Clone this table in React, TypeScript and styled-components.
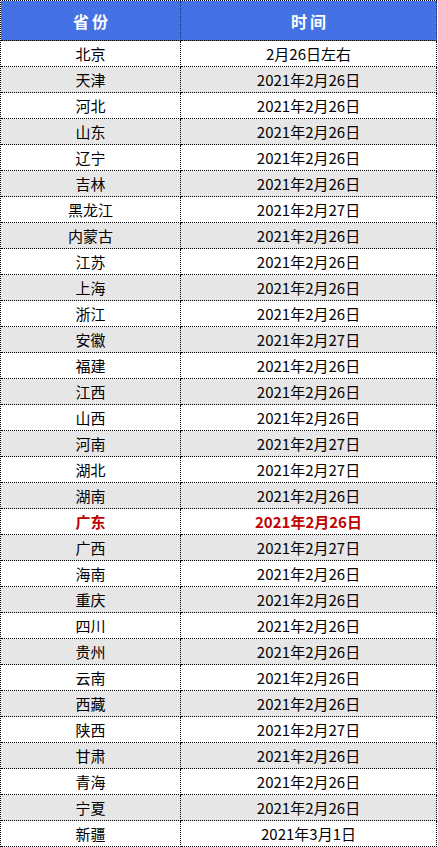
import React from 'react';
import styled, { createGlobalStyle } from 'styled-components';

const GlobalStyle = createGlobalStyle`
  html, body {
    margin: 0;
    padding: 0;
    background: #fff;
  }
  body {
    font-family: "Noto Sans CJK SC", "Noto Sans", sans-serif;
  }
`;

type Row = { province: string; date: string; highlight?: boolean };

const rows: Row[] = [
  { province: '北京', date: '2月26日左右' },
  { province: '天津', date: '2021年2月26日' },
  { province: '河北', date: '2021年2月26日' },
  { province: '山东', date: '2021年2月26日' },
  { province: '辽宁', date: '2021年2月26日' },
  { province: '吉林', date: '2021年2月26日' },
  { province: '黑龙江', date: '2021年2月27日' },
  { province: '内蒙古', date: '2021年2月26日' },
  { province: '江苏', date: '2021年2月26日' },
  { province: '上海', date: '2021年2月26日' },
  { province: '浙江', date: '2021年2月26日' },
  { province: '安徽', date: '2021年2月27日' },
  { province: '福建', date: '2021年2月26日' },
  { province: '江西', date: '2021年2月26日' },
  { province: '山西', date: '2021年2月26日' },
  { province: '河南', date: '2021年2月27日' },
  { province: '湖北', date: '2021年2月27日' },
  { province: '湖南', date: '2021年2月26日' },
  { province: '广东', date: '2021年2月26日', highlight: true },
  { province: '广西', date: '2021年2月27日' },
  { province: '海南', date: '2021年2月26日' },
  { province: '重庆', date: '2021年2月26日' },
  { province: '四川', date: '2021年2月26日' },
  { province: '贵州', date: '2021年2月26日' },
  { province: '云南', date: '2021年2月26日' },
  { province: '西藏', date: '2021年2月26日' },
  { province: '陕西', date: '2021年2月27日' },
  { province: '甘肃', date: '2021年2月26日' },
  { province: '青海', date: '2021年2月26日' },
  { province: '宁夏', date: '2021年2月26日' },
  { province: '新疆', date: '2021年3月1日' },
];

const Table = styled.div`
  width: 437px;
  box-sizing: border-box;
  border-left: 1px dotted #000;
  border-top: 1px dotted #000;
  display: grid;
  grid-template-columns: 180px 256px;
`;

const HeadCell = styled.div`
  box-sizing: border-box;
  height: 40px;
  background: #4472e4;
  color: #fff;
  font-size: 16px;
  font-weight: 700;
  letter-spacing: 3px;
  text-indent: 3px;
  display: flex;
  align-items: center;
  justify-content: center;
  border-right: 1px dotted #1a2f6a;
  border-bottom: 1px dotted #000;
`;

const Cell = styled.div<{ $shaded: boolean; $highlight?: boolean }>`
  box-sizing: border-box;
  height: 26px;
  background: ${({ $shaded }) => ($shaded ? '#e7e6e6' : '#fff')};
  color: ${({ $highlight }) => ($highlight ? '#c00000' : '#000')};
  font-weight: ${({ $highlight }) => ($highlight ? 700 : 400)};
  font-size: 15px;
  display: flex;
  align-items: center;
  justify-content: center;
  border-right: 1px dotted #000;
  border-bottom: 1px dotted #000;
`;

const App = () => (
  <>
    <GlobalStyle />
    <Table>
      <HeadCell>省份</HeadCell>
      <HeadCell>时间</HeadCell>
      {rows.map((row, i) => (
        <React.Fragment key={row.province}>
          <Cell $shaded={i % 2 === 1} $highlight={row.highlight}>
            {row.province}
          </Cell>
          <Cell $shaded={i % 2 === 1} $highlight={row.highlight}>
            {row.date}
          </Cell>
        </React.Fragment>
      ))}
    </Table>
  </>
);

export default App;
